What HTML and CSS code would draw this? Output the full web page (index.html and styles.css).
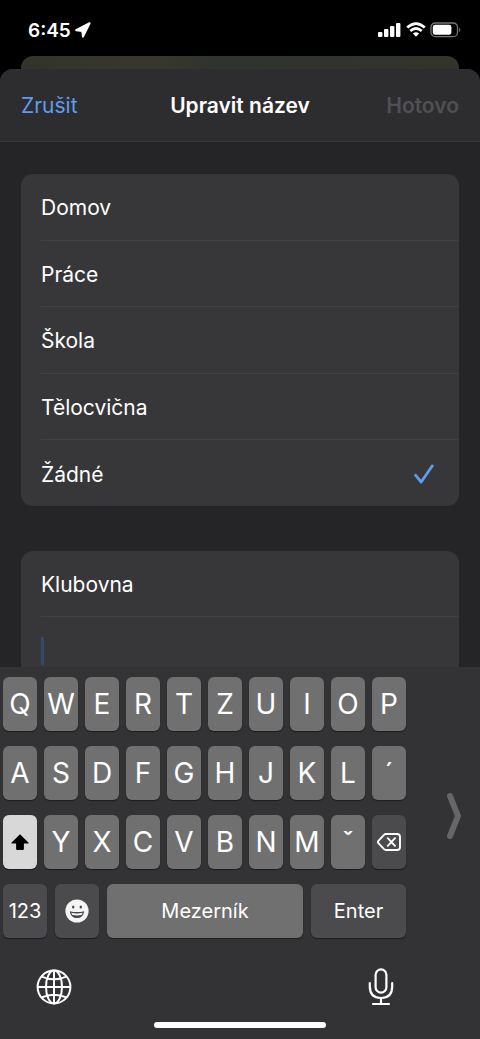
FILE: index.html
```
<!DOCTYPE html>
<html lang="cs">
<head>
    <meta charset="UTF-8">
    <meta name="viewport" content="width=device-width, initial-scale=1">
    <title>Upravit název</title>
    <link rel="stylesheet" href="styles.css">
</head>
<body>
    <div class="status">
        <div class="status-left">
            <span class="time">6:45</span>
            <svg width="16" height="16" viewBox="0 0 16 16"><path d="M14.6 1.2 L8 14.6 L7.2 8.9 L1.2 8.2 Z" fill="#fff" stroke="#fff" stroke-width="2" stroke-linejoin="round"/></svg>
        </div>
        <div class="status-right">
            <svg width="24" height="16" viewBox="0 0 24 16" fill="#fff">
                <rect x="0" y="10" width="4.4" height="5" rx="1"/>
                <rect x="6" y="7" width="4.4" height="8" rx="1"/>
                <rect x="12" y="4" width="4.4" height="11" rx="1"/>
                <rect x="18" y="1" width="4.4" height="14" rx="1"/>
            </svg>
            <svg width="20" height="16" viewBox="0 0 20 16">
                <path d="M1.2 5.6 Q10 -2.4 18.8 5.6 M4.3 9 Q10 4 15.7 9" fill="none" stroke="#fff" stroke-width="2.7"/>
                <path d="M6.9 11.5 Q10 9 13.1 11.5 L10 14.7 Z" fill="#fff"/>
            </svg>
            <svg width="32" height="16" viewBox="0 0 32 16">
                <rect x="1" y="1" width="26.5" height="13.6" rx="4.2" fill="none" stroke="#777" stroke-width="1.3"/>
                <rect x="2.8" y="2.8" width="18.6" height="10" rx="2.4" fill="#fff"/>
                <path d="M29.2 5.4 Q31.6 7.8 29.2 10.2 Z" fill="#777"/>
            </svg>
        </div>
    </div>

    <div class="behind"></div>

    <form class="sheet">
        <header class="nav">
            <button type="button" class="cancel">Zrušit</button>
            <h1>Upravit název</h1>
            <button type="button" class="done" disabled>Hotovo</button>
        </header>

        <div class="content">
            <div class="card labels">
                <label class="row"><input type="radio" name="label"><span>Domov</span></label>
                <label class="row"><input type="radio" name="label"><span>Práce</span></label>
                <label class="row"><input type="radio" name="label"><span>Škola</span></label>
                <label class="row"><input type="radio" name="label"><span>Tělocvična</span></label>
                <label class="row">
                    <input type="radio" name="label" checked><span>Žádné</span>
                    <svg class="check" width="20" height="20" viewBox="0 0 20 20"><path d="M1.5 11.2 L7.2 18 L18.2 2" fill="none" stroke="#5e9cf2" stroke-width="2.8" stroke-linecap="round" stroke-linejoin="round"/></svg>
                </label>
            </div>

            <div class="card">
                <label class="row"><input type="radio" name="label"><span>Klubovna</span></label>
                <div class="row">
                    <span class="caret"></span>
                    <input type="text" class="custom" aria-label="Vlastní název">
                </div>
            </div>
        </div>
    </form>

    <div class="keyboard">
        <div class="board">
            <div class="keys">
                <div class="line">
                    <button type="button">Q</button>
                    <button type="button">W</button>
                    <button type="button">E</button>
                    <button type="button">R</button>
                    <button type="button">T</button>
                    <button type="button">Z</button>
                    <button type="button">U</button>
                    <button type="button">I</button>
                    <button type="button">O</button>
                    <button type="button">P</button>
                </div>
                <div class="line">
                    <button type="button">A</button>
                    <button type="button">S</button>
                    <button type="button">D</button>
                    <button type="button">F</button>
                    <button type="button">G</button>
                    <button type="button">H</button>
                    <button type="button">J</button>
                    <button type="button">K</button>
                    <button type="button">L</button>
                    <button type="button">´</button>
                </div>
                <div class="line">
                    <button type="button" class="shift" aria-label="Shift">
                        <svg width="20" height="18" viewBox="0 0 20 18"><path d="M10 1.2 L18.6 9.8 Q19 10.6 18 10.6 H13.9 V15.8 Q13.9 17 12.8 17 H7.2 Q6.1 17 6.1 15.8 V10.6 H2 Q1 10.6 1.4 9.8 Z" fill="#000"/></svg>
                    </button>
                    <button type="button">Y</button>
                    <button type="button">X</button>
                    <button type="button">C</button>
                    <button type="button">V</button>
                    <button type="button">B</button>
                    <button type="button">N</button>
                    <button type="button">M</button>
                    <button type="button">ˇ</button>
                    <button type="button" class="dark" aria-label="Smazat">
                        <svg width="24" height="18" viewBox="0 0 24 18" fill="none" stroke="#fff" stroke-width="1.9" stroke-linecap="round" stroke-linejoin="round"><path d="M9 1 H20 Q23 1 23 4 V14 Q23 17 20 17 H9 Q7.8 17 7 16.2 L1.4 10.2 Q.5 9 1.4 7.8 L7 1.8 Q7.8 1 9 1 Z M10.8 5.2 L18 12.8 M18 5.2 L10.8 12.8"/></svg>
                    </button>
                </div>
                <div class="line bottom">
                    <button type="button" class="dark">123</button>
                    <button type="button" class="dark" aria-label="Emoji">
                        <svg width="24" height="24" viewBox="0 0 24 24">
                            <circle cx="12" cy="12" r="11.6" fill="#f4f4f4"/>
                            <ellipse cx="8.2" cy="8" rx="1.2" ry="1.6" fill="#444"/>
                            <ellipse cx="15.8" cy="8" rx="1.2" ry="1.6" fill="#444"/>
                            <path d="M4.8 12.2 Q12 14 19.2 12.2 Q18.4 19 12 19 Q5.6 19 4.8 12.2 Z" fill="#444"/>
                            <path d="M6.4 13.8 Q12 15.1 17.6 13.8 L17 15.8 Q12 17 7 15.8 Z" fill="#f4f4f4"/>
                        </svg>
                    </button>
                    <button type="button">Mezerník</button>
                    <button type="button" class="dark">Enter</button>
                </div>
            </div>
            <button type="button" class="expand" aria-label="Celá klávesnice">
                <svg width="16" height="48" viewBox="0 0 16 48"><path d="M4 4 L12 24 L4 44" fill="none" stroke="#666668" stroke-width="6" stroke-linecap="round" stroke-linejoin="round"/></svg>
            </button>
        </div>

        <div class="tools">
            <button type="button" aria-label="Jazyk">
                <svg width="36" height="36" viewBox="0 0 36 36" fill="none" stroke="#fff" stroke-width="2">
                    <circle cx="18" cy="18" r="16.4"/>
                    <ellipse cx="18" cy="18" rx="8" ry="16.4"/>
                    <path d="M18 1.6 V34.4 M1.6 18 H34.4 M5.6 7.6 Q18 13 30.4 7.6 M5.6 28.4 Q18 23 30.4 28.4"/>
                </svg>
            </button>
            <button type="button" aria-label="Diktování">
                <svg width="26" height="38" viewBox="0 0 26 38" fill="none" stroke="#fff" stroke-width="2.2" stroke-linecap="round">
                    <rect x="7.6" y="1.4" width="10.8" height="23.2" rx="5.4"/>
                    <path d="M1.8 15 V18.6 Q1.8 30 13 30 Q24.2 30 24.2 18.6 V15 M13 30 V36 M5 36 H21"/>
                </svg>
            </button>
        </div>
        <div class="home"></div>
    </div>
</body>
</html>
```
FILE: styles.css
```
*{
    box-sizing: border-box;
}
body{
    margin: 0;
    height: 100vh;
    display: flex;
    flex-direction: column;
    background: #000;
    color: #fff;
    font-family: Inter, "Liberation Sans", sans-serif;
    font-size: 21px;
}
button{
    margin: 0;
    padding: 0;
    border: 0;
    background: none;
    color: inherit;
    font: inherit;
    cursor: pointer;
}
svg{
    display: block;
    flex: none;
}

/* status bar */
.status{
    display: flex;
    flex: none;
    justify-content: space-between;
    align-items: center;
    height: 56px;
    padding: 4px 18px 0 28px;
}
.status-left, .status-right{
    display: flex;
    align-items: center;
    gap: 4px;
}
.time{
    font-size: 19px;
    font-weight: 600;
}

/* sheet */
.behind{
    flex: none;
    height: 13px;
    margin: 0 21px;
    border-radius: 12px 12px 0 0;
    background: linear-gradient(90deg, #32342c, #38372e 30%, #2f342e 45%, #33352c);
}
.sheet{
    flex: 1;
    min-height: 0;
    display: flex;
    flex-direction: column;
    overflow: hidden;
    border-radius: 13px 13px 0 0;
    background: #252527;
}
.nav{
    display: grid;
    flex: none;
    grid-template-columns: 1fr auto 1fr;
    align-items: center;
    height: 73px;
    padding: 0 21px;
    border-bottom: 1px solid #38383a;
    background: #2d2d2f;
}
.nav h1{
    margin: 0;
    font-size: 21px;
    font-weight: 600;
}
.cancel{
    justify-self: start;
    color: #5e9cf2;
}
.nav .done{
    justify-self: end;
    color: #505053;
    font-weight: 600;
}
.content{
    display: flex;
    flex-direction: column;
    gap: 45px;
    padding: 32px 21px 0;
}
.card{
    display: flex;
    flex-direction: column;
    padding-left: 20px;
    border-radius: 12px;
    background: #373739;
}
.labels{
    min-height: 332px;
}
.row{
    position: relative;
    display: flex;
    flex: 1 0 auto;
    justify-content: space-between;
    align-items: center;
    min-height: 66px;
    padding: 2px 25px 0 0;
    border-bottom: 1px solid #414145;
}
.row:last-child{
    border-bottom: 0;
}
.row input[type=radio]{
    position: absolute;
    opacity: 0;
}
.caret{
    width: 3px;
    height: 28px;
    background: #35486a;
}
.custom{
    flex: 1;
    min-width: 0;
    border: 0;
    outline: 0;
    background: none;
    color: #fff;
    font: inherit;
}

/* keyboard */
.keyboard{
    flex: none;
    background: #333335;
}
.board{
    display: flex;
    padding: 10px 0 0 3px;
}
.keys{
    flex: 1;
    display: grid;
    gap: 15px;
}
.line{
    display: grid;
    grid-template-columns: repeat(10, minmax(0, 1fr));
    gap: 7px;
}
.line button{
    display: flex;
    justify-content: center;
    align-items: center;
    height: 54px;
    border-radius: 6px;
    background: #707071;
    box-shadow: 0 1px 1px #1c1c1d;
    font-size: 28px;
}
.line .dark{
    background: #4b4b4d;
}
.line .shift{
    background: #d8d8d8;
}
.line.bottom{
    grid-template-columns: 44px 44px 1fr 95px;
    gap: 8px;
}
.bottom button{
    font-size: 20px;
}
.expand{
    display: flex;
    justify-content: center;
    align-items: center;
    width: 74px;
    padding: 16px 0 0 22px;
}
.tools{
    display: flex;
    justify-content: space-between;
    align-items: center;
    height: 84px;
    padding: 14px 86px 0 36px;
}
.home{
    width: 36%;
    height: 6px;
    margin: 0 auto 11px;
    border-radius: 3px;
    background: #fff;
}
```
